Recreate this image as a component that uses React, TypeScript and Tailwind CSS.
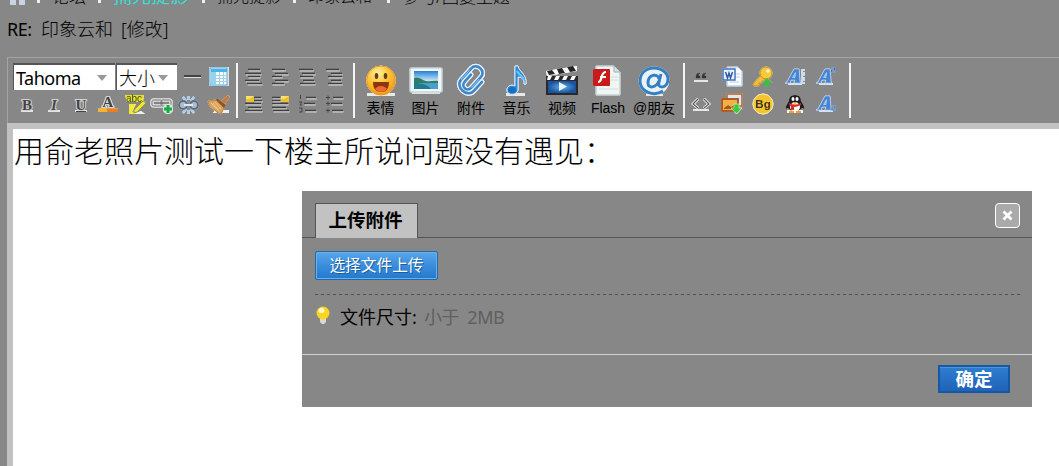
import type { ReactNode } from 'react';

function Icon({ children, size = 20 }: { children: ReactNode; size?: number }) {
    return (
        <svg
            width={size}
            height={size}
            viewBox={size > 24 ? '0 0 32 32' : '0 0 20 20'}
            fill="none"
            className="shrink-0 overflow-visible drop-shadow-[0_0_0.5px_#ffffff]"
        >
            {children}
        </svg>
    );
}

const Divider = () => <div className="h-[55px] w-[2px] shrink-0 bg-[#f4f4f4]" />;

// Small tools
const TableIcon = () => (
    <Icon>
        <path d="M0 0h20v19H0z" fill="#d8e9ee" />
        <rect x="1" y="1" width="17" height="17" fill="#f4fbff" stroke="#5aa7d8" />
        <path d="M2 2h16v3H2z" fill="#45b5ea" />
        <path d="M2 5h4v13H2z" fill="#8dd4f5" />
        <path d="M6.500 5v13M10.500 5v13M14.500 5v13M2 8.500h16M2 11.500h16M2 14.500h16" stroke="#a3cfe6" />
    </Icon>
);

function StyleLetter({ letter }: { letter: 'B' | 'I' | 'U' }) {
    return (
        <svg width="20" height="20" viewBox="0 0 20 20" className="shrink-0">
            <path d="M4 15h12v2H4z" fill="#e4e4e4" />
            <text
                x="10"
                y="15"
                textAnchor="middle"
                fontSize="15"
                fontWeight="700"
                fontFamily="Liberation Serif, serif"
                fontStyle={letter === 'I' ? 'italic' : 'normal'}
                fill="#444"
                stroke="#d4d4d4"
                strokeWidth="2"
                paintOrder="stroke"
            >
                {letter}
            </text>
            {letter === 'U' && <path d="M5 16.500h10" stroke="#444" />}
        </svg>
    );
}

const FontColorIcon = () => (
    <Icon>
        <text x="10" y="12" textAnchor="middle" fontSize="15" fontWeight="700" fontFamily="Liberation Serif, serif" fill="#444" stroke="#d4d4d4" strokeWidth="2" paintOrder="stroke">A</text>
        <path d="M0 13.500h20v3.500H0z" fill="#ee7d1b" />
        <path d="M0 13.500h9v3.500H0z" fill="#f6b42f" />
    </Icon>
);

const HighlightIcon = () => (
    <Icon>
        <path d="M0 0h19l-1 7H2z" fill="#e6df33" />
        <text x="1" y="7" fontSize="10" fontFamily="Liberation Sans, sans-serif" fill="#3c4a12">abc</text>
        <path d="M4 9h7l-4 8h5v2H4z" fill="#f2e93a" />
        <path d="M18 6l3 2-9 9-3 1 0-3z" fill="#f0e53a" stroke="#8b8420" strokeWidth=".8" />
        <path d="M9 19l7-3 4 3z" fill="#eee" />
    </Icon>
);

const LinkIcon = () => (
    <Icon>
        <rect x="0" y="5" width="10" height="6" rx="1.500" stroke="#dddddd" strokeWidth="3" />
        <rect x="9" y="5" width="10" height="6" rx="1.500" stroke="#dddddd" strokeWidth="3" />
        <rect x="0" y="5" width="10" height="6" rx="1.500" stroke="#777" />
        <rect x="9" y="5" width="10" height="6" rx="1.500" stroke="#777" />
        <path d="M4 8h10" stroke="#666" strokeWidth="1.500" />
        <circle cx="16" cy="14" r="5" fill="#d5efd8" />
        <path d="M16 10v8M12 14h8" stroke="#18a845" strokeWidth="3" />
    </Icon>
);

const UnlinkIcon = () => (
    <Icon>
        <path d="M4 2l3 4M15 2l-3 4M4 18l3-4M15 18l-3-4M9.500 1v4M9.500 15v4" stroke="#a9cdf0" strokeWidth="2.200" />
        <rect x="0" y="6" width="8" height="8" rx="4" fill="#aebdcc" stroke="#5a6c80" strokeWidth="2" />
        <rect x="11" y="6" width="8" height="8" rx="4" fill="#aebdcc" stroke="#5a6c80" strokeWidth="2" />
        <path d="M5 10h9" stroke="#dce9f5" strokeWidth="2" />
    </Icon>
);

const BroomIcon = () => (
    <Icon>
        <path d="M4 18h16v-3H6z" fill="#f0f0f0" />
        <path d="M12 6l7-6 2 2-5 7z" fill="#c27a40" />
        <path d="M8 3l9 7-2 4-9-8z" fill="#8e5424" />
        <path d="M-1 6l8-1 8 8-3 6c-3-1-5-2-6-4l-2 0c-2-2-4-4-5-9z" fill="#d9a45f" stroke="#a86f35" strokeWidth=".8" />
        <path d="M2 8l7 7M6 7l6 7M4 8l6 8" stroke="#f0cb92" strokeWidth=".8" />
    </Icon>
);

function LinesIcon({ kind }: { kind: 'left' | 'indent' | 'center' | 'right' | 'imgLeft' | 'imgRight' | 'ol' | 'ul' }) {
    const paths = {
        left: 'M4 2.500h12M1 6.500h16M4 9.500h12M1 13.500h14M3 16.500h15',
        indent: 'M1 2.500h13M4 6.500h13M1 9.500h10M4 13.500h13M1 16.500h12',
        center: 'M1 2.500h14M4 6.500h13M2 9.500h13M5 13.500h11M2 16.500h15',
        right: 'M1 2.500h13M6 6.500h11M3 9.500h14M6 13.500h10M3 16.500h14',
        imgLeft: 'M10 3.500h7M10 6.500h8M1 9.500h16M4 13.500h13M1 16.500h17',
        imgRight: 'M1 3.500h8M1 6.500h8M1 9.500h16M1 13.500h14M2 16.500h16',
        ol: 'M8 3.500h10M6 9.500h11M7 16.500h11',
        ul: 'M8 3.500h10M6 9.500h11M7 16.500h11',
    };
    return (
        <svg width="19" height="20" viewBox="0 0 19 20" fill="none" className="shrink-0">
            <path d={paths[kind]} stroke="#dadada" strokeWidth="1.600" transform="translate(0.5 1.3)" />
            <path d={paths[kind]} stroke="#3f3f3f" strokeWidth="1.300" />
            {kind === 'imgLeft' && <path d="M2 2h8v6H2z" fill="#ecc22c" />}
            {kind === 'imgLeft' && <path d="M2 2h8l-5 3H2z" fill="#f7e271" />}
            {kind === 'imgRight' && <path d="M10 2h8v6h-8z" fill="#ecc22c" />}
            {kind === 'imgRight' && <path d="M10 2h8l-5 3h-3z" fill="#f7e271" />}
            {kind === 'ol' && <path d="M2.500 1v4M1 8h3l-2 3h2M1 14h3v4H1" stroke="#444" />}
            {kind === 'ul' && <path d="M1 3.500h4M3 1.500v4M1 9.500h4M3 7.500v4M1 16.500h4M3 14.500v4" stroke="#444" />}
        </svg>
    );
}

const QuoteIcon = () => (
    <Icon>
        <path d="M3 13h14v2H3z" fill="#e6e6e6" />
        <path d="M9 6c-4 0-4 3-4 5h4V9H7c0-1 1-2 2-3zm6 0c-4 0-4 3-4 5h4V9h-2c0-1 1-2 2-3z" fill="#333" stroke="#333" />
    </Icon>
);

const CodeIcon = () => (
    <Icon>
        <path d="M2 16h16" stroke="#e6e6e6" strokeWidth="2" />
        <path d="M7 5l-5 5 5 4M13 5l5 5-5 4" stroke="#eeeeee" strokeWidth="2.500" />
        <path d="M7 5l-5 5 5 4M13 5l5 5-5 4" stroke="#555" strokeWidth="1.100" />
    </Icon>
);

const WordIcon = () => (
    <Icon>
        <path d="M5 0h11l4 4v15H5z" fill="#f8fbff" stroke="#a9bdd5" />
        <path d="M12 7h6M12 10h6M8 15h9" stroke="#bdd0e8" />
        <rect x="1" y="2" width="12" height="11" fill="#eaf2ff" stroke="#4473b8" strokeWidth="1.500" />
        <path d="M3.500 5l2 6 1.500-5L8.500 11l2-6" stroke="#2b5ba5" strokeWidth="1.500" />
    </Icon>
);

const PictureDownIcon = () => (
    <Icon>
        <rect x="5" y="0" width="15" height="12" fill="#d6eafa" stroke="#b65e20" strokeWidth="1.500" />
        <rect x="0" y="5" width="16" height="12" fill="#f3b045" stroke="#a94f1c" strokeWidth="1.800" />
        <path d="M2 14l4-3 3 2 5-3v5H2z" fill="#9e5920" />
        <path d="M12 10h5v4h3l-5.500 6L9 14h3z" fill="#3fc93f" stroke="#d7f4cd" strokeWidth=".6" />
    </Icon>
);

const KeyIcon = () => (
    <Icon>
        <path d="M0 17l8-9 5 4-4 2v2l-3 0v3H1z" fill="#f2bd3c" stroke="#b8841a" strokeWidth=".8" />
        <circle cx="13" cy="6" r="6" fill="#f9c83b" stroke="#c38e1e" />
        <circle cx="15" cy="4" r="1.800" fill="#fff6d6" />
        <path d="M14 11l6 5h-4v4h-4v-4H9z" fill="#3fbe40" />
    </Icon>
);

const BgIcon = () => (
    <Icon>
        <circle cx="10" cy="10" r="10" fill="#f4c52c" stroke="#f8e29a" />
        <text x="10" y="14" textAnchor="middle" fontSize="11.500" fontWeight="700" fontFamily="Liberation Sans, sans-serif" fill="#3b3420">Bg</text>
    </Icon>
);

const PenguinIcon = () => (
    <Icon>
        <path d="M2 16h16v3H2z" fill="#f4f4f4" />
        <path d="M10 1c-5 0-6 3-6 6-2 3-4 6-3 8l2-1c2 4 12 4 14 0l2 1c1-2-1-5-3-8 0-3-1-6-6-6z" fill="#1d1d22" />
        <ellipse cx="10" cy="13" rx="5" ry="4.500" fill="#fff" />
        <ellipse cx="8" cy="5" rx="1.500" ry="2" fill="#fff" />
        <ellipse cx="12" cy="5" rx="1.500" ry="2" fill="#fff" />
        <path d="M4 9c4 2 8 2 12 0v2c-3 1-5 2-7 2v3H6v-4l-2-1z" fill="#df2b25" />
        <path d="M7 8h6l-3 2zM4 17h5v2H4zM11 17h5v2h-5z" fill="#f0a127" />
    </Icon>
);

function LetterIcon({ kind }: { kind: 'shadow' | 'sup' | 'sub' }) {
    return (
        <Icon>
            <path d="M3 16h14v2H3z" fill="#d6e2ef" />
            <path d="M0 16l2-1L9 2h5l1 13 1 1H9l1-3H6l-1 2 1 1zM7.500 10.500h2.500l.5-5z" fill="#4684d5" stroke="#b9d3f3" strokeWidth=".6" />
            {kind === 'shadow' && <path d="M20 3h-3v3h3M20 8h-3v3h3M20 13h-3v3h3" stroke="#c5dcf5" strokeWidth="1.500" />}
            {kind === 'sup' && <path d="M15.500 1h3v2h-3v2h4" stroke="#3c70bf" strokeWidth="1.200" />}
            {kind === 'sub' && <path d="M16 12h3v2h-3v2h4" stroke="#3c70bf" strokeWidth="1.200" />}
        </Icon>
    );
}

// Large tools
const SmileIcon = () => (
    <Icon size={32}>
        <path d="M2 28h28v3H2z" fill="#e8e8e8" />
        <circle cx="16" cy="15.500" r="14.500" fill="url(#smile)" stroke="#e6981d" />
        <ellipse cx="11.500" cy="11" rx="1.800" ry="3" fill="#6b3a0c" />
        <ellipse cx="20.500" cy="11" rx="1.800" ry="3" fill="#6b3a0c" />
        <path d="M8 17h16c0 7-3 10-8 10s-8-3-8-10z" fill="#8d3410" />
        <path d="M10 24c3-4 9-4 12 0-3 4-9 4-12 0z" fill="#ef6a2d" />
        <defs>
            <radialGradient id="smile" cx=".4" cy=".25" r=".75">
                <stop stopColor="#fff0a0" />
                <stop offset=".5" stopColor="#fcc535" />
                <stop offset="1" stopColor="#f19a1c" />
            </radialGradient>
        </defs>
    </Icon>
);

const ImageIcon = () => (
    <Icon size={32}>
        <rect x="0" y="3" width="32" height="24" rx="1" fill="#f2f8fa" stroke="#a9c4ca" />
        <path d="M2 28h28" stroke="#d8e2e4" strokeWidth="1.500" />
        <rect x="4" y="6" width="24" height="18" fill="url(#sky)" />
        <path d="M4 13c5-2 8 2 12 3s8-1 12 0v2H4z" fill="#2d8060" />
        <path d="M4 18h24v6H4z" fill="#4a9fd0" />
        <path d="M4 18c8 0 14 2 17 6H4z" fill="#247a8d" />
        <defs>
            <linearGradient id="sky" x2="0" y2="1">
                <stop stopColor="#2580d6" />
                <stop offset=".6" stopColor="#d8effa" />
            </linearGradient>
        </defs>
    </Icon>
);

const ClipIcon = () => (
    <Icon size={32}>
        <g transform="translate(1 0) rotate(42 16 16)" strokeLinecap="round">
            <path d="M11 12v9c0 7 9 7 9 0V7c0-8-13-8-13 0v15c0 10 17 10 17 0V10" stroke="#e6f0f8" strokeWidth="5" />
            <path d="M11 12v9c0 7 9 7 9 0V7c0-8-13-8-13 0v15c0 10 17 10 17 0V10" stroke="#3d86c9" strokeWidth="2.600" />
            <path d="M7 10v12M20 10v11" stroke="#8ec2eb" />
        </g>
    </Icon>
);

const MusicIcon = () => (
    <Icon size={32}>
        <path d="M5 28h19v3H5z" fill="#e8e8e8" />
        <path d="M14 1h3c1 6 9 8 8 18h-2c1-5-2-7-6-7v12c0 7-11 7-11 1 0-4 4-6 8-4z" fill="#2b8bdc" stroke="#cbe5fa" />
        <ellipse cx="11" cy="25" rx="4" ry="3" fill="#1d6bbd" />
        <path d="M16 6c2 4 6 5 7 9" stroke="#78c2f4" strokeWidth="2" />
    </Icon>
);

const VideoIcon = () => (
    <Icon size={32}>
        <path d="M0 6l31-5v5L1 11z" fill="#f8f8f8" />
        <path d="M1 6l5-1 3 4-6 1zM11 4l5-1 3 5-6 1zM21 2l6-1 3 5-6 1z" fill="#252525" />
        <path d="M0 11h32v19H0z" fill="#292929" />
        <path d="M2 11h4l-2 4H1zM10 11h4l-2 4H8zM18 11h4l-2 4h-4zM26 11h4l-2 4h-4z" fill="#fff" />
        <path d="M2 16h28v12H2z" fill="url(#screen)" />
        <path d="M13 17v9l8-4.500z" fill="#eaf5ff" />
        <defs>
            <radialGradient id="screen">
                <stop stopColor="#5fb2f0" />
                <stop offset="1" stopColor="#1b529d" />
            </radialGradient>
        </defs>
    </Icon>
);

const FlashIcon = () => (
    <Icon size={32}>
        <path d="M4 1h18l6 6v23H4z" fill="#f0f5f5" stroke="#afbfc0" />
        <path d="M22 1v6h6" fill="#d8e4e4" stroke="#9faeae" />
        <path d="M19 12h7M19 15h7M7 24h19" stroke="#d5dddd" />
        <rect x="1" y="4" width="17" height="17" rx="1" fill="#c91b1c" />
        <path d="M14 7c-4 0-4 4-5 7-.5 2-1 3-3 3M8 12h6" stroke="#fff" strokeWidth="2.200" />
    </Icon>
);

const AtIcon = () => (
    <Icon size={32}>
        <path d="M8 29h17v2H8z" fill="#e8e8e8" />
        <ellipse cx="16" cy="16" rx="15" ry="14" fill="#e7f2fa" />
        <path d="M25 26c-9 6-23 1-23-10C2 8 8 3 16 3c8 0 14 5 14 11 0 5-3 8-6 8s-4-2-3-5l2-8M21 14c-1-6-11-5-11 4 0 6 8 5 11-2" stroke="#347fbf" strokeWidth="2.900" />
    </Icon>
);

const mainTools = [
    { label: '表情', icon: <SmileIcon />, width: 'w-[45px]' },
    { label: '图片', icon: <ImageIcon />, width: 'w-[45px]' },
    { label: '附件', icon: <ClipIcon />, width: 'w-[46px]' },
    { label: '音乐', icon: <MusicIcon />, width: 'w-[45px]' },
    { label: '视频', icon: <VideoIcon />, width: 'w-[46px]' },
    { label: 'Flash', icon: <FlashIcon />, width: 'w-[46px]' },
    { label: '@朋友', icon: <AtIcon />, width: 'w-[46px]' },
];

function Select({ children, className }: { children: ReactNode; className: string }) {
    return (
        <button className={`flex h-[27px] items-center justify-between border-t-2 border-l border-[#555] bg-white pr-2 pl-[2px] text-[18px] leading-none text-black ${className}`}>
            {children}
            <span className="h-0 w-0 border-x-[5px] border-t-[6px] border-x-transparent border-t-[#999]" />
        </button>
    );
}

function Toolbar() {
    return (
        <div className="flex h-[66px] border-t border-l border-[#a3a3a3] pt-[5px] pl-[5px]">
            <div className="w-[223px] shrink-0">
                <div className="flex h-[27px] items-center">
                    <Select className="w-[102px] tracking-[-0.5px]">Tahoma</Select>
                    <Select className="ml-[1px] w-[61px] !pr-[9px] font-light">大小</Select>
                    <div className="mr-[6px] ml-[7px] h-[3px] w-[17px] border-t-2 border-b border-t-[#444] border-b-[#ddd]" />
                    <div className="flex w-[24px] justify-center"><TableIcon /></div>
                </div>
                <div className="flex h-[29px] items-center">
                    <div className="flex w-[27px] justify-center"><StyleLetter letter="B" /></div>
                    <div className="flex w-[27px] justify-center"><StyleLetter letter="I" /></div>
                    <div className="flex w-[27px] justify-center"><StyleLetter letter="U" /></div>
                    <div className="flex w-[27px] justify-center"><FontColorIcon /></div>
                    <div className="flex w-[27px] justify-center"><HighlightIcon /></div>
                    <div className="flex w-[27px] justify-center"><LinkIcon /></div>
                    <div className="flex w-[27px] justify-center"><UnlinkIcon /></div>
                    <div className="flex w-[34px] justify-center"><BroomIcon /></div>
                </div>
            </div>
            <Divider />
            <div className="ml-[6px] grid w-[109px] shrink-0 grid-cols-[repeat(4,27px)] grid-rows-[27px_27px] items-center">
                <LinesIcon kind="left" />
                <LinesIcon kind="indent" />
                <LinesIcon kind="center" />
                <LinesIcon kind="right" />
                <LinesIcon kind="imgLeft" />
                <LinesIcon kind="imgRight" />
                <LinesIcon kind="ol" />
                <LinesIcon kind="ul" />
            </div>
            <Divider />
            <div className="ml-[3px] flex w-[325px] shrink-0">
                {mainTools.map((tool) => (
                    <div key={tool.label} className={`flex shrink-0 flex-col items-center pt-[2px] ${tool.width}`}>
                        {tool.icon}
                        <span className="mt-[2px] font-['Liberation_Sans','Noto_Sans_CJK_SC',sans-serif] text-[14px] leading-[18px] whitespace-nowrap">{tool.label}</span>
                    </div>
                ))}
            </div>
            <Divider />
            <div className="grid w-[164px] shrink-0 grid-cols-[repeat(5,31.300px)] grid-rows-[27px_27px] place-items-center">
                <QuoteIcon />
                <WordIcon />
                <KeyIcon />
                <LetterIcon kind="shadow" />
                <LetterIcon kind="sup" />
                <CodeIcon />
                <PictureDownIcon />
                <BgIcon />
                <PenguinIcon />
                <LetterIcon kind="sub" />
            </div>
            <Divider />
        </div>
    );
}

function Breadcrumb() {
    const arrow = <span className="mx-[12px] h-[13px] w-[3px] shrink-0 bg-[#eeeeee]" />;
    return (
        <nav className="-mt-[15px] flex h-[22px] items-center pl-[10px] text-[17px] leading-none whitespace-nowrap">
            <svg width="15" height="17" viewBox="0 0 15 17" className="shrink-0">
                <path d="M0 7l7-7 8 7v10H9v-5H6v5H0z" fill="#c7d5e3" />
            </svg>
            {arrow}
            <span className="w-[34px] font-light">论坛</span>
            {arrow}
            <span className="w-[77px] text-[19px] text-[#35dfd4]">捕光捉影</span>
            {arrow}
            <span className="w-[64px] text-[16px] font-light">捕光捉影</span>
            {arrow}
            <span className="w-[67px] text-[16px] font-light">印象云和</span>
            {arrow}
            <span className="font-light">参与/回复主题</span>
        </nav>
    );
}

function UploadDialog() {
    return (
        <div className="absolute top-[191px] left-[302px] h-[216px] w-[730px] bg-[#878787]">
            <div className="flex h-[47px] items-start justify-between border-b border-[#555] pt-3 pr-3 pl-[13px]">
                <div className="h-[35px] w-[103px] border border-b-0 border-[#555] bg-[#c2c2c2] pr-[2px] text-center text-[18.500px] leading-[31px] font-bold">上传附件</div>
                <button className="flex h-[25px] w-[25px] items-center justify-center rounded-[4px] border border-white bg-[#aaa]">
                    <svg width="11" height="11" viewBox="0 0 11 11">
                        <path d="M1.500 1.500l8 8M9.500 1.500l-8 8" stroke="#fff" strokeWidth="2.800" />
                    </svg>
                </button>
            </div>
            <div className="h-[116px] px-[13px] pt-[13px]">
                <button className="block h-[29px] w-[123px] rounded-[2px] border border-[#2866a8] bg-linear-to-b from-[#59a6e9] via-[#3a8ddb] to-[#2379cd] pb-[2px] text-[15.700px] leading-[24px] text-white shadow-[inset_0_0_0_1px_#65b2ef] [text-shadow:1px_1px_0_#1d5c9c]">选择文件上传</button>
                <div className="mt-[14px] h-px w-[705px] bg-[repeating-linear-gradient(90deg,#505050_0,#505050_3px,transparent_3px,transparent_6px)]" />
                <div className="mt-[8px] flex h-[28px] items-center text-[18px] leading-none">
                    <svg width="16" height="18" viewBox="0 0 16 18" className="mr-[9px] mb-1 shrink-0">
                        <path d="M5 12h6v4l-2 2H7l-2-2z" fill="#d9d9d9" />
                        <circle cx="8" cy="7" r="6.500" fill="#fbd51f" />
                        <ellipse cx="6.500" cy="4.500" rx="3" ry="2.500" fill="#fffbd0" />
                    </svg>
                    <span className="w-[84px]">文件尺寸:</span>
                    <span className="tracking-[-0.5px] text-[#606060]">小于&nbsp; 2MB</span>
                </div>
            </div>
            <div className="flex h-[53px] justify-end border-t border-[#d0d0d0] pt-[10px] pr-[22px]">
                <button className="h-[28px] w-[72px] border-2 border-[#1559a4] bg-linear-to-b from-[#2f7ed0] to-[#2062b7] text-[18.500px] leading-[24px] font-bold text-white shadow-[inset_0_1px_0_#4895df]">确定</button>
            </div>
        </div>
    );
}

export default function App() {
    return (
        <div className="relative flex h-[466px] w-[1059px] flex-col overflow-hidden bg-[#878787] font-['Noto_Sans','Noto_Sans_CJK_SC',sans-serif] text-black">
            <Breadcrumb />
            <div className="flex h-[50px] items-center pb-[7px] pl-[7px] text-[18px] leading-none whitespace-nowrap">
                <span className="w-[34px] tracking-[-0.5px]">RE:</span>
                <span className="w-[80px] font-light">印象云和</span>
                <span className="font-light">[修改]</span>
            </div>
            <div className="ml-[7px] flex flex-1 flex-col">
                <Toolbar />
                <div className="flex-1 border-t-[6px] border-l-[6px] border-[#c1c1c1] bg-white">
                    <p className="pl-[1px] text-[30px] leading-[44px] font-light whitespace-nowrap">用俞老照片测试一下楼主所说问题没有遇见：</p>
                </div>
            </div>
            <UploadDialog />
        </div>
    );
}
